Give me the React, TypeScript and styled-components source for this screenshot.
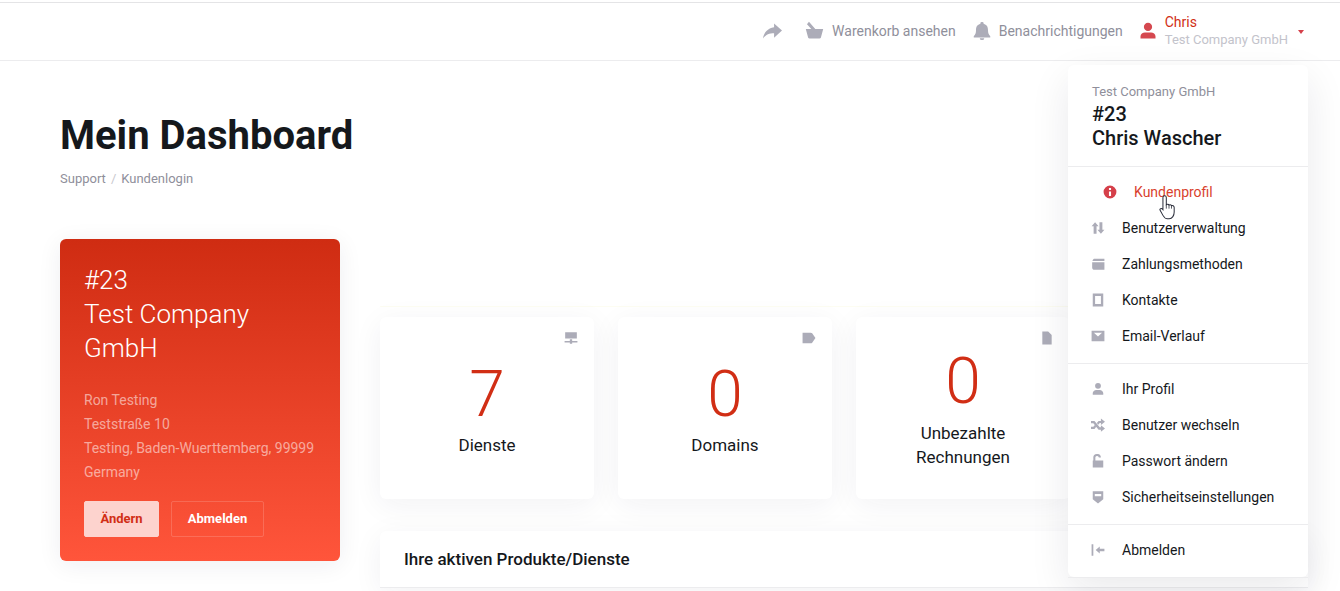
import React from "react";
import styled, { createGlobalStyle } from "styled-components";

const Global = createGlobalStyle`
  html, body { margin: 0; padding: 0; background: #fff; height: 591px; overflow: hidden; }
  body { font-family: Roboto, "Liberation Sans", sans-serif; color: #15181c; }
  * { box-sizing: border-box; }
`;

const Page = styled.div`
  position: relative;
  width: 1340px;
  height: 591px;
  overflow: hidden;
  padding-top: 2px;
`;
const Header = styled.header`
  height: 59px;
  border-top: 1px solid #e4e4e6;
  border-bottom: 1px solid #ececee;
  display: flex;
  align-items: center;
  justify-content: flex-end;
  padding: 0 36px 2px 0;
  color: #8f8f9b;
  font-size: 14px;
`;
const HeadItem = styled.div<{ $gap?: number; $ml?: number }>`
  display: flex;
  align-items: center;
  gap: ${(p) => p.$gap ?? 8}px;
  margin-left: ${(p) => p.$ml ?? 0}px;
`;
const UserText = styled.div`
  display: flex;
  flex-direction: column;
  line-height: 17px;
  margin-top: 1px;
`;
const UserName = styled.span`
  color: #d12e15;
`;
const UserCompany = styled.span`
  color: #c3c3cb;
  font-size: 13px;
`;
const Caret = styled.span`
  width: 0;
  height: 0;
  margin: 2px 0 0 2px;
  border-left: 3.5px solid transparent;
  border-right: 3.5px solid transparent;
  border-top: 4px solid #d5404a;
`;
const Content = styled.main`
  padding: 57px 32px 0 60px;
`;
const Title = styled.h1`
  margin: 0;
  font-size: 40px;
  font-weight: 700;
  line-height: 36px;
  color: #15181c;
`;
const Crumbs = styled.div`
  margin-top: 16px;
  font-size: 13px;
  line-height: 18px;
  color: #8f8f9b;
  display: flex;
  gap: 5px;
`;
const Sep = styled.span`
  color: #c8c8ce;
`;
const Columns = styled.div`
  margin-top: 51px;
  display: flex;
  align-items: flex-start;
  gap: 40px;
`;
const Profile = styled.section`
  flex: 0 0 280px;
  height: 322px;
  padding: 24px;
  border-radius: 6px;
  background: linear-gradient(180deg, #cf2c12 0%, #ff553b 100%);
  box-shadow: 0 4px 24px rgba(30, 30, 60, 0.07);
  color: #fff;
`;
const ProfileName = styled.div`
  font-size: 26px;
  font-weight: 300;
  line-height: 34px;
`;
const Address = styled.div`
  margin-top: 23px;
  font-size: 14px;
  line-height: 24px;
  color: rgba(255, 255, 255, 0.55);
`;
const Actions = styled.div`
  margin-top: 17px;
  display: flex;
  gap: 12px;
`;
const Btn = styled.button<{ $solid?: boolean }>`
  height: 36px;
  padding: 0 0 1px;
  width: ${(p) => (p.$solid ? 75 : 93)}px;
  font: 700 13px Roboto, sans-serif;
  border-radius: 2px;
  border: 1px solid ${(p) => (p.$solid ? "#fdd3ce" : "rgba(255,255,255,0.16)")};
  background: ${(p) => (p.$solid ? "#fdd3ce" : "transparent")};
  color: ${(p) => (p.$solid ? "#d12e15" : "#fff")};
`;
const Main = styled.div`
  flex: 1;
  min-width: 0;
  padding-top: 67px;
`;
const Stats = styled.div`
  display: flex;
  gap: 24px;
  padding-top: 10px;
  border-top: 1px solid #fdfdf2;
`;
const Stat = styled.div`
  position: relative;
  flex: 0 0 214px;
  height: 182px;
  background: #fff;
  border-radius: 6px;
  box-shadow: 0 6px 30px rgba(30, 30, 60, 0.06);
  display: flex;
  flex-direction: column;
  align-items: center;
  padding-top: 40px;
`;
const StatIcon = styled.span`
  position: absolute;
  top: 14px;
  right: 16px;
  width: 14px;
  height: 14px;
  color: #acacb8;
  display: flex;
`;
const StatNum = styled.div<{ $raised?: boolean }>`
  font-size: 64px;
  font-weight: 300;
  line-height: 72px;
  color: #d12e15;
  margin-top: ${(p) => (p.$raised ? -11 : 2)}px;
  margin-bottom: ${(p) => (p.$raised ? -1 : -2)}px;
`;
const StatLabel = styled.div`
  margin-top: 4px;
  width: 130px;
  font-size: 17px;
  line-height: 24px;
  text-align: center;
  color: #15181c;
`;
const Panel = styled.div`
  margin-top: 32px;
  background: #fff;
  border-radius: 6px 6px 0 0;
  box-shadow: 0 6px 30px rgba(30, 30, 60, 0.06);
`;
const PanelHead = styled.div`
  height: 57px;
  border-bottom: 1px solid #ececee;
  padding-left: 24px;
  font-size: 17px;
  font-weight: 500;
  line-height: 56px;
`;
const Menu = styled.nav`
  position: absolute;
  top: 65px;
  left: 1068px;
  width: 240px;
  height: 512px;
  background: #fff;
  border-radius: 6px;
  box-shadow: 0 14px 40px rgba(20, 20, 40, 0.09);
  font-size: 14px;
`;
const MenuHead = styled.div`
  height: 102px;
  padding: 18px 24px 0;
  border-bottom: 1px solid #ececee;
`;
const MenuCompany = styled.div`
  font-size: 13px;
  line-height: 17px;
  color: #8f8f9b;
`;
const MenuName = styled.div`
  margin-top: 2px;
  font-size: 20px;
  font-weight: 500;
  line-height: 24px;
  color: #15181c;
`;
const Group = styled.div`
  padding: 7px 0 9px;
  border-bottom: 1px solid #ececee;
  &:last-child {
    border-bottom: 0;
  }
`;
const Item = styled.div<{ $active?: boolean }>`
  height: 36px;
  display: flex;
  align-items: center;
  gap: 17px;
  padding-left: ${(p) => (p.$active ? 35 : 23)}px;
  color: ${(p) => (p.$active ? "#d93f2e" : "#15181c")};
  & > svg {
    flex: 0 0 14px;
    color: ${(p) => (p.$active ? "#d5404a" : "#acacb8")};
  }
`;
const Cursor = styled.svg`
  position: absolute;
  top: 129px;
  left: 91px;
`;

const Ic: React.FC<{ s?: number; d: string; c?: string }> = ({ s = 14, d, c }) => (
  <svg width={s} height={s} viewBox="0 0 24 24" fill="currentColor" fillRule="evenodd" style={c ? { color: c } : undefined}>
    <path d={d} />
  </svg>
);

const P = {
  share: "M14 3l10 9-10 9v-5.500C8 15.500 4 17 0 22c1-7 6-13 14-14z",
  basket: "M5 1l8 9h10l-3 11a2 2 0 0 1-2 1H6a2 2 0 0 1-2-1L1 10h7L2.500 4z",
  bell: "M12 0a2.200 2.200 0 0 1 2.200 2.500C19 3.500 20 7 20 11c0 4 1 6 3 8v1.500H1V19c2-2 3-4 3-8 0-4 1-7.500 5.800-8.500A2.200 2.200 0 0 1 12 0zM9 21.500h6a3 2.500 0 0 1-6 0z",
  user: "M12 1a5.500 5.500 0 1 1 0 11 5.500 5.500 0 0 1 0-11zM2 22v-3c0-3 3-5 6-5h8c3 0 6 2 6 5v3z",
  info: "M12 1a11 11 0 1 1 0 22 11 11 0 0 1 0-22zm-1.800 4v3.500h3.600V5zm0 6v8h3.600v-8z",
  sort: "M7 2l6 7H9.500v13h-5V9H1zM17 22l-6-7h3.500V2h5v13H23z",
  wallet: "M5 3h18v4H2.500C3 5 3.500 4 5 3zM2 9h21v13H6c-2.500 0-4-1.500-4-4z",
  book: "M3 1h18v22H3zM7 5v14h10V5z",
  mail: "M1 3h22v18H1zM5 6.500l7 6.500 7-6.500z",
  profile: "M12 1.500a5 5 0 1 1 0 10 5 5 0 0 1 0-10zM3 22v-3c0-3 3-5.500 6-5.500h6c3 0 6 2.500 6 5.500v3z",
  shuffle: "M0 5h6l9 11h2v-3.500L24 18l-7 5.500V20h-4L4 9H0zM17 1l7 5.500L17 12V8.500h-2l-2.500 3-2.500-3L13 5h4zM0 15h4l2.500-3 2.500 3L6 19H0z",
  lock: "M4 11V7a6.500 6.500 0 0 1 13-1h-3.500a3 3 0 0 0-6 1v4H21v12H3V11z",
  shield: "M3 2h18v14l-9 7-9-7zM6.500 7v3.500h11V7z",
  logout: "M1 2h3v20H1zM8 12l7-6v4h8v4h-8v4z",
  server: "M2 2h20v11H2zM10 14h4v3h9v2.500h-9V22h-4v-2.500H1V17h9z",
  tag: "M1 3h14c1 0 2 .5 2.500 1L23 12l-5.500 8c-.5.5-1.500 1-2.500 1H1z",
  file: "M4 1h10l6 6v16H4z",
};

export default function App() {
  return (
    <Page>
      <Global />
      <Header>
        <Ic s={19} d={P.share} c="#acacb8" />
        <HeadItem $ml={23}>
          <Ic s={19} d={P.basket} c="#acacb8" />
          <span>Warenkorb ansehen</span>
        </HeadItem>
        <HeadItem $ml={17} $gap={8}>
          <Ic s={18} d={P.bell} c="#acacb8" />
          <span>Benachrichtigungen</span>
        </HeadItem>
        <HeadItem $ml={16} $gap={8}>
          <Ic s={18} d={P.user} c="#d5484f" />
          <UserText>
            <UserName>Chris</UserName>
            <UserCompany>Test Company GmbH</UserCompany>
          </UserText>
          <Caret />
        </HeadItem>
      </Header>
      <Content>
        <Title>Mein Dashboard</Title>
        <Crumbs>
          <span>Support</span>
          <Sep>/</Sep>
          <span>Kundenlogin</span>
        </Crumbs>
        <Columns>
          <Profile>
            <ProfileName>
              #23
              <br />
              Test Company
              <br />
              GmbH
            </ProfileName>
            <Address>
              Ron Testing
              <br />
              Teststraße 10
              <br />
              Testing, Baden-Wuerttemberg, 99999
              <br />
              Germany
            </Address>
            <Actions>
              <Btn $solid>Ändern</Btn>
              <Btn>Abmelden</Btn>
            </Actions>
          </Profile>
          <Main>
            <Stats>
              <Stat>
                <StatIcon>
                  <Ic s={14} d={P.server} />
                </StatIcon>
                <StatNum>7</StatNum>
                <StatLabel>Dienste</StatLabel>
              </Stat>
              <Stat>
                <StatIcon>
                  <Ic s={14} d={P.tag} />
                </StatIcon>
                <StatNum>0</StatNum>
                <StatLabel>Domains</StatLabel>
              </Stat>
              <Stat>
                <StatIcon>
                  <Ic s={14} d={P.file} />
                </StatIcon>
                <StatNum $raised>0</StatNum>
                <StatLabel>Unbezahlte Rechnungen</StatLabel>
              </Stat>
            </Stats>
            <Panel>
              <PanelHead>Ihre aktiven Produkte/Dienste</PanelHead>
            </Panel>
          </Main>
        </Columns>
      </Content>
      <Menu>
        <MenuHead>
          <MenuCompany>Test Company GmbH</MenuCompany>
          <MenuName>
            #23
            <br />
            Chris Wascher
          </MenuName>
        </MenuHead>
        <Group>
          <Item $active>
            <Ic d={P.info} />
            <span>Kundenprofil</span>
          </Item>
          <Item>
            <Ic d={P.sort} />
            <span>Benutzerverwaltung</span>
          </Item>
          <Item>
            <Ic d={P.wallet} />
            <span>Zahlungsmethoden</span>
          </Item>
          <Item>
            <Ic d={P.book} />
            <span>Kontakte</span>
          </Item>
          <Item>
            <Ic d={P.mail} />
            <span>Email-Verlauf</span>
          </Item>
        </Group>
        <Group>
          <Item>
            <Ic d={P.profile} />
            <span>Ihr Profil</span>
          </Item>
          <Item>
            <Ic d={P.shuffle} />
            <span>Benutzer wechseln</span>
          </Item>
          <Item>
            <Ic d={P.lock} />
            <span>Passwort ändern</span>
          </Item>
          <Item>
            <Ic d={P.shield} />
            <span>Sicherheitseinstellungen</span>
          </Item>
        </Group>
        <Group>
          <Item>
            <Ic d={P.logout} />
            <span>Abmelden</span>
          </Item>
        </Group>
        <Cursor width="18" height="27" viewBox="0 0 16 24">
          <path
            d="M5 1.500c1 0 1.500.7 1.500 1.500v6.500c.8-.6 2-.4 2.400.3.800-.4 1.800-.2 2.200.5.900-.3 2.400.2 2.400 1.700v4c0 3-1.600 6-4.500 6H7.500c-2 0-3-1.200-4-3L1 14.500c-.6-1 .5-2.200 1.700-1.400L3.500 14V3c0-.8.700-1.500 1.500-1.500z"
            fill="#fff"
            stroke="#2a2d3a"
            strokeWidth="0.9"
          />
          <path d="M6.500 9.500v3.500M8.900 9.800v3.200M11.100 10.300v2.700" fill="none" stroke="#2a2d3a" strokeWidth="0.7" />
        </Cursor>
      </Menu>
    </Page>
  );
}
